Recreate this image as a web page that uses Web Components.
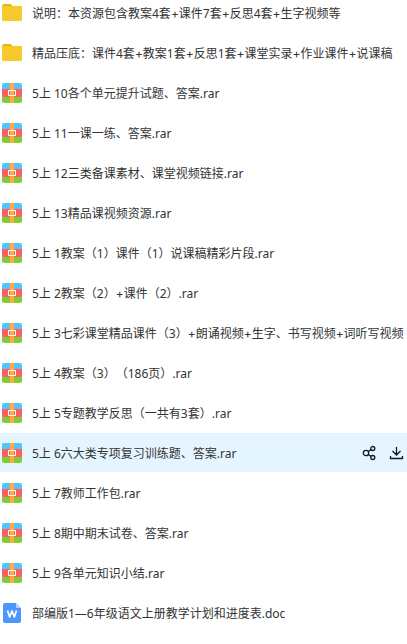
<!DOCTYPE html>
<html lang="zh-CN">
<head>
<meta charset="utf-8">
<meta name="viewport" content="width=device-width, initial-scale=1">
<title>文件列表</title>
<style>
    body {
        margin: 0;
        background: #fff;
        color: #333;
        font: 12px/20px "Noto Sans", "Noto Sans CJK SC", sans-serif;
        overflow: hidden;
    }
</style>
</head>
<body>
<file-list>
    <file-row type="folder" name="说明：本资源包含教案4套+课件7套+反思4套+生字视频等"></file-row>
    <file-row type="folder" name="精品压底：课件4套+教案1套+反思1套+课堂实录+作业课件+说课稿"></file-row>
    <file-row type="rar" name="5上 10各个单元提升试题、答案.rar"></file-row>
    <file-row type="rar" name="5上 11一课一练、答案.rar"></file-row>
    <file-row type="rar" name="5上 12三类备课素材、课堂视频链接.rar"></file-row>
    <file-row type="rar" name="5上 13精品课视频资源.rar"></file-row>
    <file-row type="rar" name="5上 1教案（1）课件（1）说课稿精彩片段.rar"></file-row>
    <file-row type="rar" name="5上 2教案（2）+课件（2）.rar"></file-row>
    <file-row type="rar" name="5上 3七彩课堂精品课件（3）+朗诵视频+生字、书写视频+词听写视频"></file-row>
    <file-row type="rar" name="5上 4教案（3）（186页）.rar"></file-row>
    <file-row type="rar" name="5上 5专题教学反思（一共有3套）.rar"></file-row>
    <file-row type="rar" name="5上 6六大类专项复习训练题、答案.rar" active><row-actions></row-actions></file-row>
    <file-row type="rar" name="5上 7教师工作包.rar"></file-row>
    <file-row type="rar" name="5上 8期中期末试卷、答案.rar"></file-row>
    <file-row type="rar" name="5上 9各单元知识小结.rar"></file-row>
    <file-row type="doc" name="部编版1—6年级语文上册教学计划和进度表.doc"></file-row>
</file-list>

<script>
const ICONS = {
    folder: `
        <path d="M0 4V3q0-2 2-2h6q1 0 1.500 1l.8 1H18q2 0 2 2v3H0z" fill="#e8b407"/>
        <rect y="3" width="20" height="15" rx="1.500" fill="#f8c92c"/>`,
    rar: `
        <path d="M0 7V2q0-2 2-2h16q2 0 2 2v5z" fill="#55c4f7"/>
        <path d="M0 6h20v8H0z" fill="#ff5f5f"/>
        <path d="M0 14h20v4q0 2-2 2H2q-2 0-2-2z" fill="#80cc38"/>
        <path d="M8 0h4v20H8z" fill="#ffab40"/>
        <path d="M6.500 7.500h7v5h-7z" fill="#ffab40" stroke="#fff"/>
        <path d="M7 8h1v4H7zM12 8h1v4h-1z" fill="#ff5f5f"/>`,
    doc: `
        <path d="M1 2q0-2 2-2h11l5 5v13q0 2-2 2H3q-2 0-2-2z" fill="#4c96fd"/>
        <path d="M14 0l5 5h-4q-1 0-1-1z" fill="#b7d5ff"/>
        <path d="M5.500 7.500l2.200 6.500L10 8l2.300 6 2.200-6.500" fill="none" stroke="#fff" stroke-width="1.700" stroke-linejoin="round"/>`
};

class FileIcon extends HTMLElement {
    connectedCallback() {
        this.attachShadow({ mode: 'open' });
        this.shadowRoot.innerHTML = `
            <style>
                :host {
                    display: block;
                    flex: none;
                    width: 20px;
                    height: 20px;
                }

                svg {
                    display: block;
                }
            </style>
            <svg width="20" height="20" viewBox="0 0 20 20" aria-hidden="true">${ICONS[this.getAttribute('type')]}</svg>
        `;
    }
}

class RowActions extends HTMLElement {
    connectedCallback() {
        this.attachShadow({ mode: 'open' });
        this.shadowRoot.innerHTML = `
            <style>
                :host {
                    display: flex;
                    flex: none;
                    gap: 12px;
                }

                button {
                    padding: 0;
                    border: 0;
                    background: none;
                    color: #0b1830;
                    cursor: pointer;
                }

                svg {
                    display: block;
                    fill: none;
                    stroke: currentColor;
                }
            </style>
            <button type="button" aria-label="分享">
                <svg width="15" height="16" viewBox="0 0 15 16" stroke-width="1.300">
                    <circle cx="4" cy="8" r="2.700"/>
                    <circle cx="10.800" cy="3.500" r="2"/>
                    <circle cx="10.800" cy="12.500" r="2"/>
                    <path d="M6.300 6.500l2.800-1.900M6.300 9.500l2.800 1.900"/>
                </svg>
            </button>
            <button type="button" aria-label="下载">
                <svg width="15" height="16" viewBox="0 0 15 16" stroke-width="1.300">
                    <path d="M7.500 2v8M3.500 6l4 4 4-4M1.500 11v2.500h12V11"/>
                </svg>
            </button>
        `;
    }
}

class FileRow extends HTMLElement {
    connectedCallback() {
        // the plus signs use Inter, whose plus is wider
        const name = this.getAttribute('name').replaceAll('+', '<span>+</span>');
        this.setAttribute('role', 'listitem');
        this.attachShadow({ mode: 'open' });
        this.shadowRoot.innerHTML = `
            <style>
                :host {
                    display: flex;
                    align-items: center;
                    gap: 10px;
                    height: 39px;
                    padding: 0 3px 0 2px;
                }

                :host([active]) {
                    background: #e5f5ff;
                }

                a {
                    flex: 1;
                    padding-top: 2px;
                    color: inherit;
                    text-decoration: none;
                    white-space: nowrap;
                    text-spacing-trim: space-all;
                }

                span {
                    font-family: Inter, sans-serif;
                }
            </style>
            <file-icon type="${this.getAttribute('type')}"></file-icon>
            <a href="#">${name}</a>
            <slot></slot>
        `;
    }
}

class FileList extends HTMLElement {
    connectedCallback() {
        this.setAttribute('role', 'list');
        this.attachShadow({ mode: 'open' });
        this.shadowRoot.innerHTML = `
            <style>
                /* the list is scrolled a little past its first row */
                :host {
                    display: grid;
                    grid-template-columns: minmax(0, 1fr);
                    gap: 1px;
                    margin-top: -7px;
                    overflow: hidden;
                }
            </style>
            <slot></slot>
        `;
    }
}

customElements.define('file-icon', FileIcon);
customElements.define('row-actions', RowActions);
customElements.define('file-row', FileRow);
customElements.define('file-list', FileList);
</script>
</body>
</html>
